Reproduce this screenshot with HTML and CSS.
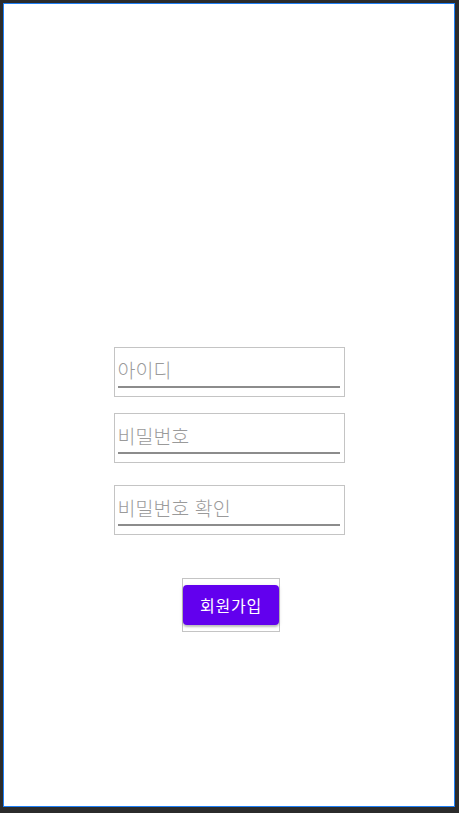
FILE: index.html
```html
<!DOCTYPE html>
<html lang="ko">
<head>
<meta charset="utf-8">
<title>회원가입</title>
<link rel="stylesheet" href="styles.css">
</head>
<body>
<div class="frame">
  <main class="form">
    <div class="field"><input class="input" type="text" placeholder="아이디"></div>
    <div class="field field-2"><input class="input" type="password" placeholder="비밀번호"></div>
    <div class="field field-3"><input class="input" type="password" placeholder="비밀번호 확인"></div>
    <div class="button-box"><button class="btn" type="button">회원가입</button></div>
  </main>
</div>
</body>
</html>
```
FILE: styles.css
```css
html, body {
  margin: 0;
  padding: 0;
  height: 100%;
}
body {
  background: #2b2b2b;
  font-family: "Noto Sans CJK KR", "Noto Sans", Roboto, sans-serif;
  box-sizing: border-box;
  padding: 3px 4px 6px 3px;
}
.frame {
  box-sizing: border-box;
  height: 100%;
  border: 1px solid #1e7ff5;
  background: #ffffff;
}
.form {
  display: flex;
  flex-direction: column;
  align-items: center;
  padding-top: 343px;
}
.field {
  box-sizing: border-box;
  width: 231px;
  height: 50px;
  border: 1px solid #c4c4c4;
  display: flex;
  align-items: flex-end;
  padding: 0 4px 8px 3px;
}
.field-2 { margin-top: 16px; }
.field-3 { margin-top: 22px; }
.input {
  box-sizing: border-box;
  width: 100%;
  height: 36px;
  margin: 0;
  padding: 0;
  border: none;
  border-bottom: 2px solid #8c8c8c;
  outline: none;
  background: transparent;
  font-family: "Noto Sans CJK KR", sans-serif;
  font-size: 19.5px;
  font-weight: 300;
  line-height: 28px;
  color: #222;
}
.input::placeholder {
  color: #9a9a9a;
  opacity: 1;
}
.button-box {
  box-sizing: border-box;
  margin-top: 43px;
  margin-left: 4px;
  width: 98px;
  height: 54px;
  border: 1px solid #c4c4c4;
  display: flex;
  justify-content: center;
  padding-top: 6px;
}
.btn {
  width: 96px;
  height: 40px;
  margin: 0;
  border: none;
  border-radius: 4px;
  background: #6200ee;
  color: #ffffff;
  font-family: "Noto Sans CJK KR", sans-serif;
  font-size: 16px;
  letter-spacing: 0.8px;
  box-shadow: 0 2px 2px rgba(0,0,0,0.2), 0 1px 4px rgba(0,0,0,0.12);
  padding: 0;
  cursor: pointer;
}
```
